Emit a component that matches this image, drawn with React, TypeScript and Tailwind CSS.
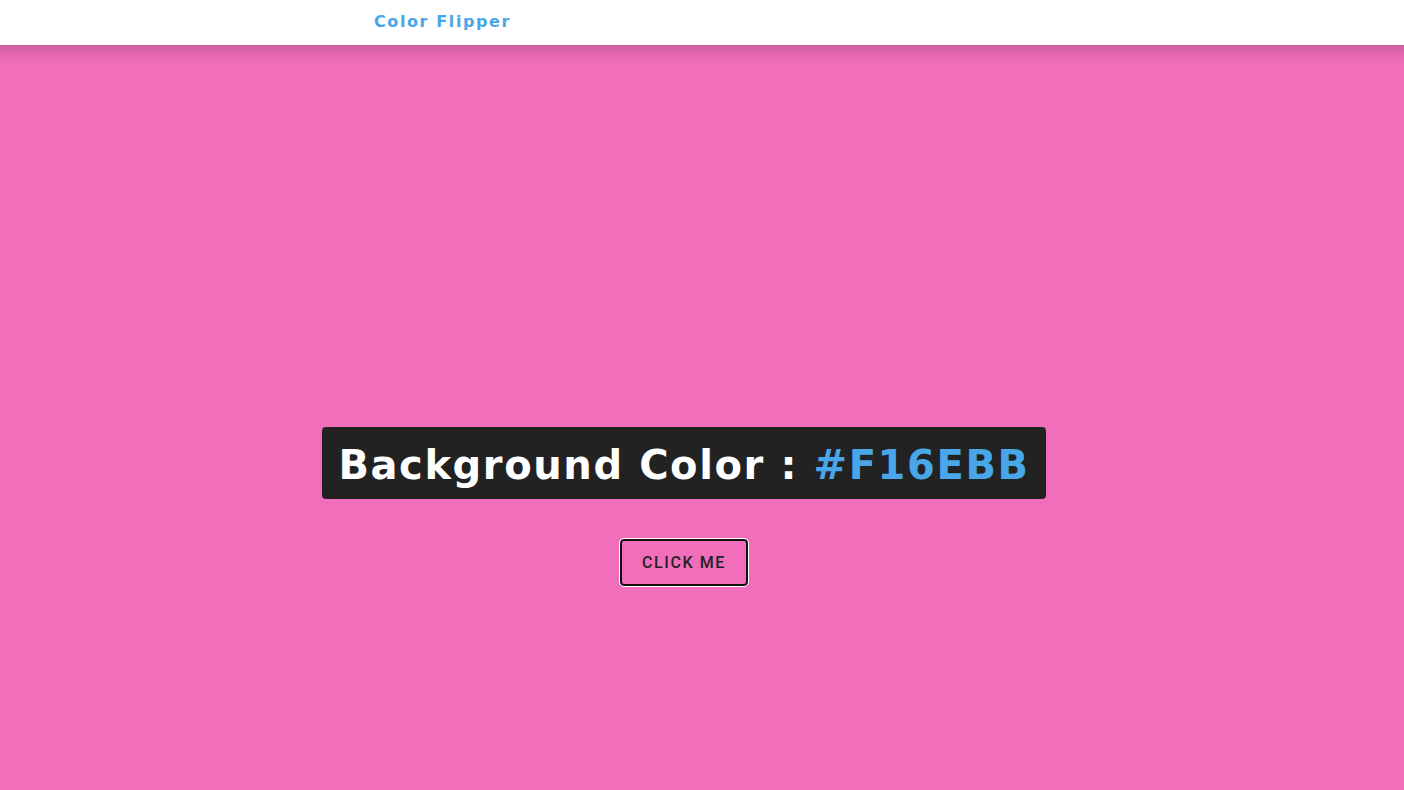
import { useState } from "react";

const HEX_DIGITS = "0123456789ABCDEF";

function randomHex(): string {
  let hex = "#";
  for (let i = 0; i < 6; i++) {
    hex += HEX_DIGITS[Math.floor(Math.random() * HEX_DIGITS.length)];
  }
  return hex;
}

export default function App() {
  const [color, setColor] = useState("#F16EBB");

  return (
    <div
      className="flex min-h-screen flex-col overflow-x-hidden font-['Verdana','DejaVu_Sans',sans-serif] text-[#222222]"
      style={{ backgroundColor: color }}
    >
      <nav className="-mx-6 bg-white px-6 shadow-[0_5px_15px_rgba(0,0,0,0.2)]">
        <div className="mx-auto flex h-[45px] w-full max-w-[656px] items-center">
          <h4 className="pb-0.5 text-[16px] font-bold leading-5 tracking-widest text-[#49a6e9]">
            Color Flipper
          </h4>
        </div>
      </nav>
      <main className="flex flex-1 flex-col items-center justify-center pt-[178px] pr-9">
        <h2 className="mb-10 rounded-sm bg-[#222222] px-4 pt-[18px] pb-[14px] text-[40px] font-bold leading-10 tracking-[0.1rem] text-white">
          Background Color : <span className="text-[#49a6e9]">{color}</span>
        </h2>
        <button
          type="button"
          autoFocus
          onClick={() => setColor(randomHex())}
          className="rounded-sm border-2 border-[#101010] px-5 py-2 font-['Roboto',sans-serif] text-[16px] font-medium uppercase leading-[27px] tracking-widest text-[#222222] outline-1 outline-white"
        >
          Click me
        </button>
      </main>
    </div>
  );
}
